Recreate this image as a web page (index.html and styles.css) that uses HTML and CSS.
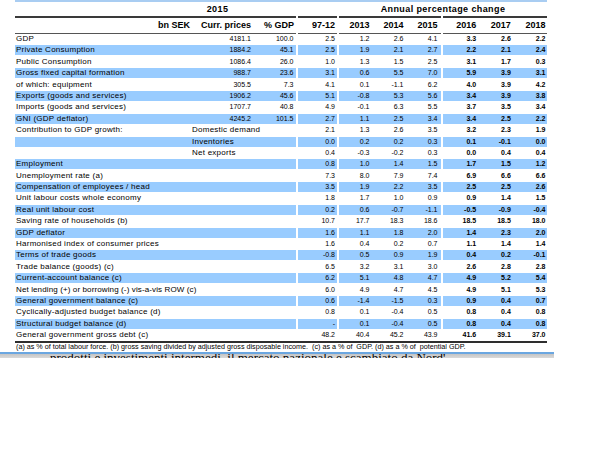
FILE: index.html
```html
<!DOCTYPE html>
<html>
<head>
<meta charset="utf-8">
<link rel="stylesheet" href="styles.css">
</head>
<body>
<div class="sheet">
  <div class="topline"></div>
  <div class="grid hrow1">
    <div class="g1"><span></span><span class="yr">2015</span><span></span></div>
    <div></div>
    <div class="span34">Annual percentage change</div>
  </div>
  <div class="grid rule rule1"><div></div><div></div><div></div><div></div></div>
  <div class="grid hrow2">
    <div class="g1"><span class="r">bn SEK</span><span class="r pr">Curr. prices</span><span class="r pr">% GDP</span></div>
    <div class="r pr">97-12</div>
    <div class="g3"><span>2013</span><span>2014</span><span>2015</span></div>
    <div class="g4"><span>2016</span><span>2017</span><span>2018</span></div>
  </div>
  <div class="grid rule rule2"><div></div><div></div><div></div><div></div></div>

  <div class="rows">
    <div class="grid row"><div class="g1"><span class="lab">GDP</span><span class="n">4181.1</span><span class="n">100.0</span></div><div class="n">2.5</div><div class="g3"><span>1.2</span><span>2.6</span><span>4.1</span></div><div class="g4"><span>3.3</span><span>2.6</span><span>2.2</span></div></div>
    <div class="grid row alt"><div class="g1"><span class="lab">Private Consumption</span><span class="n">1884.2</span><span class="n">45.1</span></div><div class="n">2.5</div><div class="g3"><span>1.9</span><span>2.1</span><span>2.7</span></div><div class="g4"><span>2.2</span><span>2.1</span><span>2.4</span></div></div>
    <div class="grid row"><div class="g1"><span class="lab">Public Consumption</span><span class="n">1086.4</span><span class="n">26.0</span></div><div class="n">1.0</div><div class="g3"><span>1.3</span><span>1.5</span><span>2.5</span></div><div class="g4"><span>3.1</span><span>1.7</span><span>0.3</span></div></div>
    <div class="grid row alt"><div class="g1"><span class="lab">Gross fixed capital formation</span><span class="n">988.7</span><span class="n">23.6</span></div><div class="n">3.1</div><div class="g3"><span>0.6</span><span>5.5</span><span>7.0</span></div><div class="g4"><span>5.9</span><span>3.9</span><span>3.1</span></div></div>
    <div class="grid row"><div class="g1"><span class="lab">of which: equipment</span><span class="n">305.5</span><span class="n">7.3</span></div><div class="n">4.1</div><div class="g3"><span>0.1</span><span>-1.1</span><span>6.2</span></div><div class="g4"><span>4.0</span><span>3.9</span><span>4.2</span></div></div>
    <div class="grid row alt"><div class="g1"><span class="lab">Exports (goods and services)</span><span class="n">1906.2</span><span class="n">45.6</span></div><div class="n">5.1</div><div class="g3"><span>-0.8</span><span>5.3</span><span>5.6</span></div><div class="g4"><span>3.4</span><span>3.9</span><span>3.8</span></div></div>
    <div class="grid row"><div class="g1"><span class="lab">Imports (goods and services)</span><span class="n">1707.7</span><span class="n">40.8</span></div><div class="n">4.9</div><div class="g3"><span>-0.1</span><span>6.3</span><span>5.5</span></div><div class="g4"><span>3.7</span><span>3.5</span><span>3.4</span></div></div>
    <div class="grid row alt"><div class="g1"><span class="lab">GNI (GDP deflator)</span><span class="n">4245.2</span><span class="n">101.5</span></div><div class="n">2.7</div><div class="g3"><span>1.1</span><span>2.5</span><span>3.4</span></div><div class="g4"><span>3.4</span><span>2.5</span><span>2.2</span></div></div>
    <div class="grid row"><div class="g1"><span class="lab">Contribution to GDP growth:</span><span class="sub">Domestic demand</span><span></span></div><div class="n">2.1</div><div class="g3"><span>1.3</span><span>2.6</span><span>3.5</span></div><div class="g4"><span>3.2</span><span>2.3</span><span>1.9</span></div></div>
    <div class="grid row alt"><div class="g1"><span class="lab"></span><span class="sub">Inventories</span><span></span></div><div class="n">0.0</div><div class="g3"><span>0.2</span><span>0.2</span><span>0.3</span></div><div class="g4"><span>0.1</span><span>-0.1</span><span>0.0</span></div></div>
    <div class="grid row"><div class="g1"><span class="lab"></span><span class="sub">Net exports</span><span></span></div><div class="n">0.4</div><div class="g3"><span>-0.3</span><span>-0.2</span><span>0.3</span></div><div class="g4"><span>0.0</span><span>0.4</span><span>0.4</span></div></div>
    <div class="grid row alt"><div class="g1"><span class="lab">Employment</span><span></span><span></span></div><div class="n">0.8</div><div class="g3"><span>1.0</span><span>1.4</span><span>1.5</span></div><div class="g4"><span>1.7</span><span>1.5</span><span>1.2</span></div></div>
    <div class="grid row"><div class="g1"><span class="lab">Unemployment rate (a)</span><span></span><span></span></div><div class="n">7.3</div><div class="g3"><span>8.0</span><span>7.9</span><span>7.4</span></div><div class="g4"><span>6.9</span><span>6.6</span><span>6.6</span></div></div>
    <div class="grid row alt"><div class="g1"><span class="lab">Compensation of employees / head</span><span></span><span></span></div><div class="n">3.5</div><div class="g3"><span>1.9</span><span>2.2</span><span>3.5</span></div><div class="g4"><span>2.5</span><span>2.5</span><span>2.6</span></div></div>
    <div class="grid row"><div class="g1"><span class="lab">Unit labour costs whole economy</span><span></span><span></span></div><div class="n">1.8</div><div class="g3"><span>1.7</span><span>1.0</span><span>0.9</span></div><div class="g4"><span>0.9</span><span>1.4</span><span>1.5</span></div></div>
    <div class="grid row alt"><div class="g1"><span class="lab">Real unit labour cost</span><span></span><span></span></div><div class="n">0.2</div><div class="g3"><span>0.6</span><span>-0.7</span><span>-1.1</span></div><div class="g4"><span>-0.5</span><span>-0.9</span><span>-0.4</span></div></div>
    <div class="grid row"><div class="g1"><span class="lab">Saving rate of households (b)</span><span></span><span></span></div><div class="n">10.7</div><div class="g3"><span>17.7</span><span>18.3</span><span>18.6</span></div><div class="g4"><span>18.5</span><span>18.5</span><span>18.0</span></div></div>
    <div class="grid row alt"><div class="g1"><span class="lab">GDP deflator</span><span></span><span></span></div><div class="n">1.6</div><div class="g3"><span>1.1</span><span>1.8</span><span>2.0</span></div><div class="g4"><span>1.4</span><span>2.3</span><span>2.0</span></div></div>
    <div class="grid row"><div class="g1"><span class="lab">Harmonised index of consumer prices</span><span></span><span></span></div><div class="n">1.6</div><div class="g3"><span>0.4</span><span>0.2</span><span>0.7</span></div><div class="g4"><span>1.1</span><span>1.4</span><span>1.4</span></div></div>
    <div class="grid row alt"><div class="g1"><span class="lab">Terms of trade goods</span><span></span><span></span></div><div class="n">-0.8</div><div class="g3"><span>0.5</span><span>0.9</span><span>1.9</span></div><div class="g4"><span>0.4</span><span>0.2</span><span>-0.1</span></div></div>
    <div class="grid row"><div class="g1"><span class="lab">Trade balance (goods) (c)</span><span></span><span></span></div><div class="n">6.5</div><div class="g3"><span>3.2</span><span>3.1</span><span>3.0</span></div><div class="g4"><span>2.6</span><span>2.8</span><span>2.8</span></div></div>
    <div class="grid row alt"><div class="g1"><span class="lab">Current-account balance (c)</span><span></span><span></span></div><div class="n">6.2</div><div class="g3"><span>5.1</span><span>4.8</span><span>4.7</span></div><div class="g4"><span>4.9</span><span>5.2</span><span>5.4</span></div></div>
    <div class="grid row"><div class="g1"><span class="lab tight">Net lending (+) or borrowing (-) vis-a-vis ROW (c)</span><span></span><span></span></div><div class="n">6.0</div><div class="g3"><span>4.9</span><span>4.7</span><span>4.5</span></div><div class="g4"><span>4.9</span><span>5.1</span><span>5.3</span></div></div>
    <div class="grid row alt"><div class="g1"><span class="lab">General government balance (c)</span><span></span><span></span></div><div class="n">0.6</div><div class="g3"><span>-1.4</span><span>-1.5</span><span>0.3</span></div><div class="g4"><span>0.9</span><span>0.4</span><span>0.7</span></div></div>
    <div class="grid row"><div class="g1"><span class="lab">Cyclically-adjusted budget balance (d)</span><span></span><span></span></div><div class="n">0.8</div><div class="g3"><span>0.1</span><span>-0.4</span><span>0.5</span></div><div class="g4"><span>0.8</span><span>0.4</span><span>0.8</span></div></div>
    <div class="grid row alt"><div class="g1"><span class="lab">Structural budget balance (d)</span><span></span><span></span></div><div class="n">-</div><div class="g3"><span>0.1</span><span>-0.4</span><span>0.5</span></div><div class="g4"><span>0.8</span><span>0.4</span><span>0.8</span></div></div>
    <div class="grid row"><div class="g1"><span class="lab">General government gross debt (c)</span><span></span><span></span></div><div class="n">48.2</div><div class="g3"><span>40.4</span><span>45.2</span><span>43.9</span></div><div class="g4"><span>41.6</span><span>39.1</span><span>37.0</span></div></div>
  </div>
  <div class="bottomrule"></div>
  <div class="foot">(a) as % of total labour force. (b) gross saving divided by adjusted gross disposable income. &nbsp;(c) as a % of &nbsp;GDP. (d) as a % of &nbsp;potential GDP.</div>
</div>
<div class="strip">
  <div class="stripline"></div>
  <div class="stripband"><div class="cliptext">prodotti e investimenti intermedi, il mercato nazionale e scambiato da Nord'</div></div>
</div>
</body>
</html>
```
FILE: styles.css
```css
body {
  margin: 0;
  background: #ffffff;
  color: #000000;
  font-family: "Liberation Sans", Arial, sans-serif;
}

.sheet {
  padding-left: 15px;
  width: 532px;
}

.topline {
  height: 1.5px;
  background: #a9cdf2;
}

.grid {
  display: grid;
  grid-template-columns: 281px 39px 102px 104px;
  column-gap: 2px;
}

.g1 {
  display: grid;
  grid-template-columns: 175px 63px 43px;
}

.g3,
.g4 {
  display: grid;
  grid-template-columns: repeat(3, 1fr);
}

/* header rows */
.hrow1 {
  height: 14px;
  align-items: center;
  font-size: 9px;
  font-weight: bold;
  letter-spacing: 0.4px;
}

.hrow1 .yr {
  text-align: center;
  padding-right: 8px;
}

.span34 {
  grid-column: 3 / 5;
  text-align: center;
  white-space: nowrap;
}

.rule > div {
  background: #3a3a3a;
}

.rule1 {
  height: 2px;
}

.rule2 {
  height: 1.5px;
}

.rule2 > div {
  background: #555555;
}

.hrow2 {
  height: 15px;
  align-items: center;
  font-size: 9px;
  font-weight: bold;
  white-space: nowrap;
}

.hrow2 .r {
  text-align: right;
}

.hrow2 .pr {
  padding-right: 2px;
}

.hrow2 .g3 span {
  text-align: right;
  padding-right: 3.5px;
}

.hrow2 .g4 span {
  text-align: right;
  padding-right: 1.5px;
}

/* data rows */
.rows {
  display: grid;
  row-gap: 1.4px;
}

.row {
  height: 10px;
  line-height: 10px;
  font-size: 7px;
  white-space: nowrap;
}

.row.alt > div {
  background: #99ccff;
}

.lab {
  font-size: 8px;
  letter-spacing: 0.25px;
  padding-left: 1px;
  overflow: visible;
}

.lab.tight {
  letter-spacing: 0.12px;
}

.sub {
  font-size: 8px;
  letter-spacing: 0.25px;
  padding-left: 2px;
}

.n {
  text-align: right;
  padding-right: 2px;
}

.row .g1 .n:last-child {
  padding-right: 2.5px;
}

.row .g3 span {
  text-align: right;
  padding-right: 3.5px;
}

.row .g4 span {
  text-align: right;
  padding-right: 1.5px;
  font-weight: bold;
}

.bottomrule {
  margin-top: 0.5px;
  height: 2px;
  background: #2e2e2e;
}

.foot {
  height: 8px;
  line-height: 8px;
  font-size: 7.2px;
  padding-left: 1px;
  white-space: nowrap;
}

/* strip of the next page peeking below */
.strip {
  width: 554px;
  margin-top: 1.5px;
}

.stripline {
  height: 1.5px;
  background: #6aa6e0;
}

.stripband {
  height: 4.5px;
  overflow: hidden;
  background: linear-gradient(#c4c4c4, #dadada);
}

.cliptext {
  margin-top: -2px;
  padding-left: 50px;
  font-family: "Liberation Serif", "Times New Roman", serif;
  font-size: 13px;
  line-height: 12px;
  white-space: nowrap;
}
```
